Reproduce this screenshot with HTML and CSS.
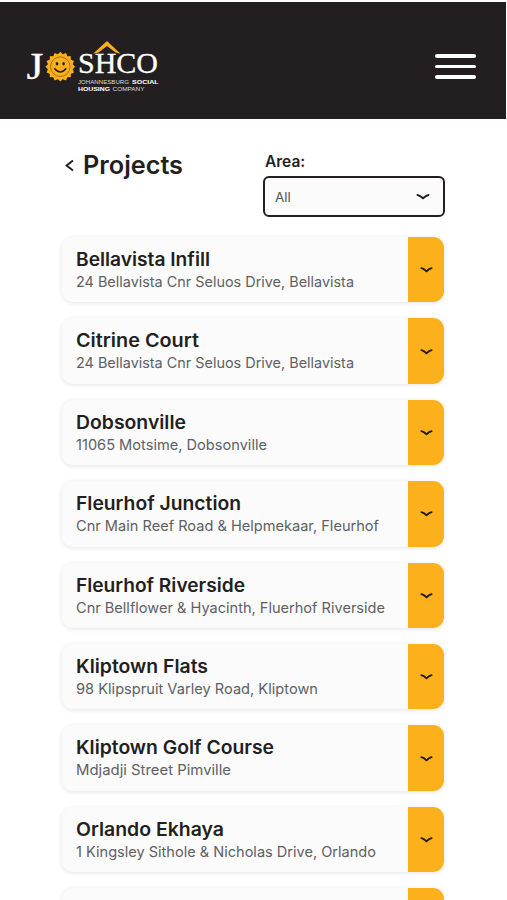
FILE: index.html
```html
<!DOCTYPE html>
<html lang="en">

<head>
    <meta charset="UTF-8">
    <meta name="viewport" content="width=device-width, initial-scale=1.0">
    <title>JOSHCO - Projects</title>
    <link rel="stylesheet" href="styles.css">
</head>

<body>

    <header class="site-header">
        <a href="#" class="logo" aria-label="JOSHCO">
            <svg width="136" height="56" viewBox="0 0 136 56">
                <g class="logo-name">
                    <text x="1.500" y="42" font-size="38" textLength="17" lengthAdjust="spacingAndGlyphs">J</text>
                    <text x="53" y="35.800" font-size="28.500" textLength="80" lengthAdjust="spacingAndGlyphs">SHCO</text>
                </g>
                <!-- roof -->
                <path d="M68 16.800 82 4 95.500 16.800 90.500 15.500 82 9 73.500 15.500Z" fill="#fbb01b" />
                <!-- sun -->
                <g transform="translate(35.300 29.700)">
                    <g fill="#fbb01b">
                        <rect x="-10.500" y="-10.500" width="21" height="21" />
                        <rect x="-10.500" y="-10.500" width="21" height="21" transform="rotate(22.500)" />
                        <rect x="-10.500" y="-10.500" width="21" height="21" transform="rotate(45)" />
                        <rect x="-10.500" y="-10.500" width="21" height="21" transform="rotate(67.500)" />
                    </g>
                    <circle r="9.800" fill="none" stroke="#8a621d" stroke-width="0.800" />
                    <ellipse cx="-3.300" cy="-3" rx="1.300" ry="1.700" fill="#231f20" />
                    <ellipse cx="3.300" cy="-3" rx="1.300" ry="1.700" fill="#231f20" />
                    <path d="M-6 1.500Q0 9 6 1.500" fill="none" stroke="#231f20" stroke-width="1.500" />
                </g>
                <g class="logo-tagline">
                    <text x="53" y="47.300" textLength="51" lengthAdjust="spacingAndGlyphs">JOHANNESBURG</text>
                    <text x="107" y="47.300" class="strong" textLength="26.500" lengthAdjust="spacingAndGlyphs">SOCIAL</text>
                    <text x="53" y="54.300" class="strong" textLength="32" lengthAdjust="spacingAndGlyphs">HOUSING</text>
                    <text x="87.500" y="54.300" textLength="32" lengthAdjust="spacingAndGlyphs">COMPANY</text>
                </g>
            </svg>
        </a>
        <button class="menu-btn" aria-label="Menu">
            <span></span>
            <span></span>
            <span></span>
        </button>
    </header>

    <main class="content">
        <div class="page-head">
            <div class="page-title">
                <svg class="back" width="9" height="13" viewBox="0 0 9 13">
                    <path d="M8 1.500 1.500 6.500 8 11.500" />
                </svg>
                <h1><svg class="fit" width="101" height="34"><text x="0" y="25.500" textLength="100" lengthAdjust="spacingAndGlyphs">Projects</text></svg></h1>
            </div>
            <div class="filter">
                <label>Area:</label>
                <div class="select">
                    <span>All</span>
                    <svg class="chevron" width="14" height="8" viewBox="0 0 14 8">
                        <path d="M1.500 2Q4 2.500 7 5.300 10 2.500 12.500 2" />
                    </svg>
                </div>
            </div>
        </div>

        <div id="projects" class="projects"></div>
    </main>

    <script src="script.js"></script>
</body>

</html>
```

FILE: styles.css
```css
* {
    box-sizing: border-box;
}

body {
    margin: 0;
    height: 900px;
    padding-top: 2px;
    overflow: hidden;
    background-color: #fff;
    color: #231f20;
    font-family: Inter, "Noto Sans", sans-serif;
}

.site-header {
    display: flex;
    justify-content: space-between;
    height: 117px;
    margin-right: 1px;
    padding: 35px 30px 0 25px;
    background-color: #231f20;
}

.logo svg {
    display: block;
}

.logo-name {
    fill: #fff;
    stroke: #fff;
    stroke-width: 0.300px;
    font-family: "Liberation Serif", serif;
}

.logo-tagline {
    fill: #ddd;
    font-family: "Liberation Sans", sans-serif;
    font-size: 6.200px;
}

.logo-tagline .strong {
    fill: #fff;
    font-weight: bold;
}

.menu-btn {
    display: flex;
    flex-direction: column;
    gap: 7px;
    width: 41px;
    height: 25px;
    margin-top: 17px;
    padding: 0;
    border: 0;
    background: none;
}

.menu-btn span {
    width: 41px;
    height: 3.500px;
    flex: none;
    border-radius: 2px;
    background-color: #fff;
}

.content {
    padding: 32px 63px 0 62px;
}

.page-head {
    display: flex;
    justify-content: space-between;
    height: 86px;
}

.page-title {
    display: flex;
    gap: 9px;
    padding-left: 3px;
}

.back {
    margin-top: 8px;
    fill: none;
    stroke: #231f20;
    stroke-width: 2;
}

.fit {
    display: block;
    overflow: visible;
    fill: currentColor;
}

h1 {
    margin: -3px 0 0;
    font-size: 25px;
    font-weight: 600;
}

.filter {
    width: 182px;
    margin-right: -1px;
}

.filter label {
    display: block;
    height: 25px;
    padding: 1px 0 0 2px;
    font-size: 15.500px;
    font-weight: 600;
    line-height: 20px;
}

.select {
    display: flex;
    align-items: center;
    justify-content: space-between;
    height: 41px;
    padding: 0 13px 0 10px;
    border: 2px solid #231f20;
    border-radius: 6px;
    background-color: #fbfbfb;
    color: #55565a;
    font-size: 13.500px;
}

.chevron {
    fill: none;
    stroke: #231f20;
    stroke-width: 2;
    stroke-linecap: round;
    stroke-linejoin: round;
}

.projects {
    display: flex;
    flex-direction: column;
    gap: 16px;
}

.project {
    display: flex;
    flex: none;
    height: 65.400px;
    border-radius: 11px;
    background-color: #fbfbfb;
    box-shadow: 0 1px 5px rgba(0, 0, 0, 0.11);
    overflow: hidden;
}

.project-info {
    flex: 1;
    padding: 10px 0 0 14px;
}

.project h2 {
    margin: 0;
    font-size: 18.500px;
    font-weight: 600;
}

.project p {
    margin: 0;
    color: #606063;
    font-size: 14.500px;
}

.toggle {
    display: flex;
    align-items: center;
    justify-content: center;
    width: 36px;
    padding: 1px 0 0;
    border: 0;
    background-color: #fcb01c;
}

.toggle .chevron {
    width: 13px;
}
```

FILE: script.js
```js
// name, address, and the width each line takes up
const projects = [
    ['Bellavista Infill', 134, '24 Bellavista Cnr Seluos Drive, Bellavista', 278],
    ['Citrine Court', 123, '24 Bellavista Cnr Seluos Drive, Bellavista', 278],
    ['Dobsonville', 110, '11065 Motsime, Dobsonville', 191],
    ['Fleurhof Junction', 165, 'Cnr Main Reef Road & Helpmekaar, Fleurhof', 303],
    ['Fleurhof Riverside', 169, 'Cnr Bellflower & Hyacinth, Fluerhof Riverside', 309],
    ['Kliptown Flats', 132, '98 Klipspruit Varley Road, Kliptown', 242],
    ['Kliptown Golf Course', 198, 'Mdjadji Street Pimville', 155],
    ['Orlando Ekhaya', 148, '1 Kingsley Sithole & Nicholas Drive, Orlando', 300],
    ['', 0, '', 0]
];

function line(text, width, height, baseline) {
    if (!text) return '';
    return `<svg class="fit" width="${width}" height="${height}"><text x="0" y="${baseline}" textLength="${width}" lengthAdjust="spacingAndGlyphs">${text.replace('&', '&amp;')}</text></svg>`;
}

const list = document.getElementById('projects');

projects.forEach(([name, nameWidth, address, addressWidth]) => {
    const card = document.createElement('article');
    card.className = 'project';
    card.innerHTML = `
        <div class="project-info">
            <h2>${line(name, nameWidth, 25, 18.5)}</h2>
            <p>${line(address, addressWidth, 20, 15)}</p>
        </div>
        <button class="toggle" aria-label="Show details">
            <svg class="chevron" width="14" height="8" viewBox="0 0 14 8">
                <path d="M1.500 2Q4 2.500 7 5.300 10 2.500 12.500 2" />
            </svg>
        </button>`;
    list.appendChild(card);
});
```
